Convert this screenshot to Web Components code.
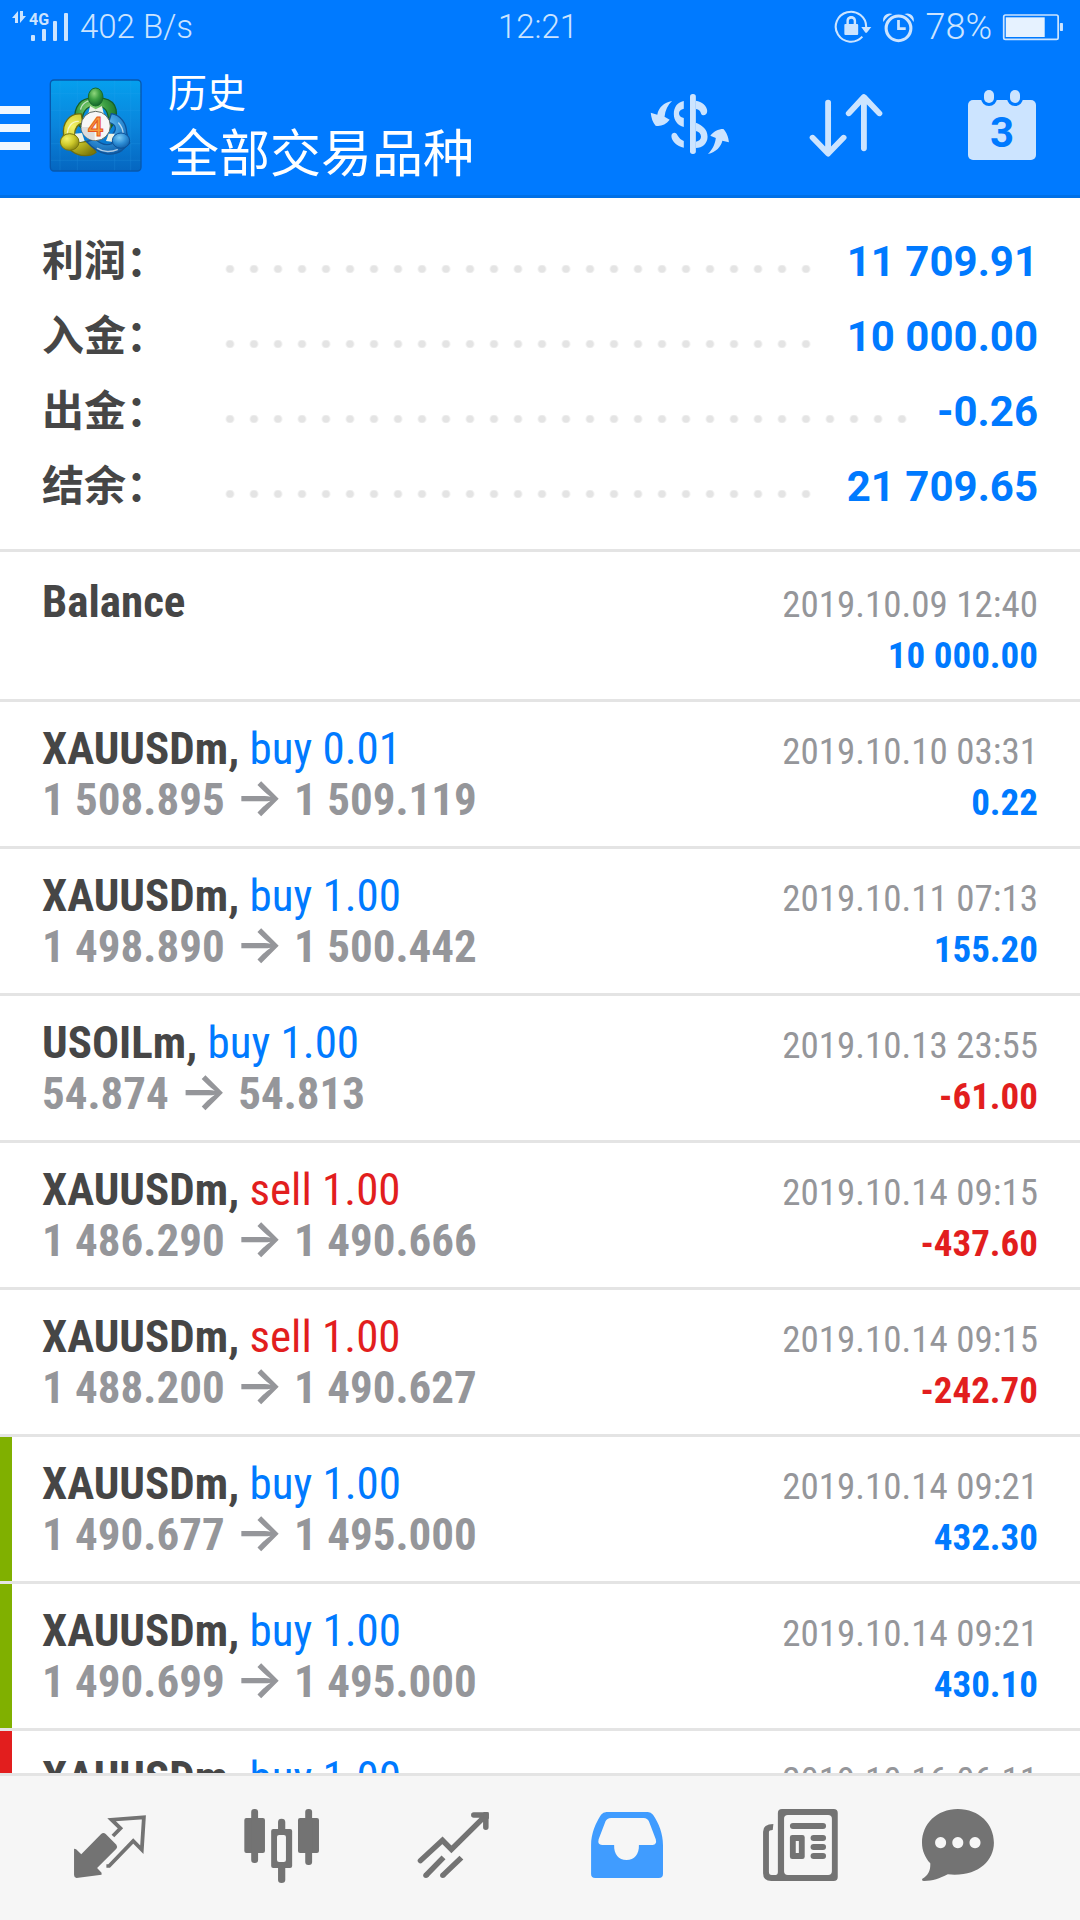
<!DOCTYPE html>
<html lang="zh-CN">
<head>
<meta charset="utf-8">
<meta name="viewport" content="width=device-width, initial-scale=1">
<title>历史</title>
<style>
  html, body { height: 100%; margin: 0; }
  body { font-family: Roboto, "Noto Sans CJK SC", sans-serif; background: #fff; color: #464646; }
</style>
</head>
<body>
<trade-app>
  <status-bar slot="top"></status-bar>
  <app-header slot="top">
    <span slot="title">历史</span>
    <span slot="subtitle">全部交易品种</span>
  </app-header>

  <account-summary>
    <summary-line value="11 709.91">利润：</summary-line>
    <summary-line value="10 000.00">入金：</summary-line>
    <summary-line value="-0.26">出金：</summary-line>
    <summary-line value="21 709.65">结余：</summary-line>
  </account-summary>

  <deal-row class="first" symbol="Balance" time="2019.10.09 12:40" profit="10 000.00"></deal-row>
  <deal-row symbol="XAUUSDm" side="buy" volume="0.01" open="1 508.895" close="1 509.119" time="2019.10.10 03:31" profit="0.22"></deal-row>
  <deal-row symbol="XAUUSDm" side="buy" volume="1.00" open="1 498.890" close="1 500.442" time="2019.10.11 07:13" profit="155.20"></deal-row>
  <deal-row symbol="USOILm" side="buy" volume="1.00" open="54.874" close="54.813" time="2019.10.13 23:55" profit="-61.00"></deal-row>
  <deal-row symbol="XAUUSDm" side="sell" volume="1.00" open="1 486.290" close="1 490.666" time="2019.10.14 09:15" profit="-437.60"></deal-row>
  <deal-row symbol="XAUUSDm" side="sell" volume="1.00" open="1 488.200" close="1 490.627" time="2019.10.14 09:15" profit="-242.70"></deal-row>
  <deal-row mark="tp" symbol="XAUUSDm" side="buy" volume="1.00" open="1 490.677" close="1 495.000" time="2019.10.14 09:21" profit="432.30"></deal-row>
  <deal-row mark="tp" symbol="XAUUSDm" side="buy" volume="1.00" open="1 490.699" close="1 495.000" time="2019.10.14 09:21" profit="430.10"></deal-row>
  <deal-row mark="sl" symbol="XAUUSDm" side="buy" volume="1.00" time="2019.10.16 06:11"></deal-row>

  <tab-bar slot="bottom"></tab-bar>
</trade-app>

<template id="t-app">
  <style>
    :host { display: flex; flex-direction: column; height: 100vh; }
    main { flex: 1; min-height: 0; overflow: hidden; background: #fff; }
  </style>
  <slot name="top"></slot>
  <main><slot></slot></main>
  <slot name="bottom"></slot>
</template>

<template id="t-status">
  <style>
    :host { display: grid; grid-template-columns: 1fr auto 1fr; align-items: center; box-sizing: border-box; height: 55px; padding: 0 16px 2px 12px;
      background: #007aff; color: #cce4ff; font-size: 33px; font-weight: 300; line-height: 1; }
    div { display: flex; align-items: center; gap: 10px; }
    .right { justify-content: flex-end; font-size: 36px; }
    svg { display: block; flex: none; }
  </style>
  <div>
    <svg width="58" height="46" viewBox="12 4 58 46" fill="#cce4ff" role="img" aria-label="4G">
      <path d="M12 18L18 11V23H15V18ZM20 11H23V16H26L20 23Z"/>
      <text x="29" y="25" font-family="Roboto" font-weight="700" font-size="16">4G</text>
      <rect x="31" y="35" width="4" height="6" rx="1"/><rect x="42" y="29" width="4" height="12" rx="1"/>
      <rect x="53" y="21" width="4" height="20" rx="1"/><rect x="64" y="13" width="4" height="28" rx="1"/>
    </svg>
    <span>402 B/s</span>
  </div>
  <time>12:21</time>
  <div class="right">
    <svg width="38" height="34" viewBox="850 30 110 102" preserveAspectRatio="none" fill="#cce4ff" aria-hidden="true">
      <path d="M943 82A44 45 0 1 0 932 110" fill="none" stroke="#cce4ff" stroke-width="6"/>
      <path d="M929 81H958L945 98H941Z"/>
      <path d="M880 74Q880 72 883 72H886V62C886 43 914 43 914 62V72H917Q920 72 920 75V102Q920 105 917 105H883Q880 105 880 102ZM893 72H907V63C907 54 893 54 893 63Z" fill-rule="evenodd"/>
    </svg>
    <svg width="33" height="34" viewBox="990 30 96 102" preserveAspectRatio="none" fill="none" stroke="#cce4ff" aria-hidden="true">
      <ellipse cx="1038" cy="85" rx="36" ry="37" stroke-width="9"/>
      <path d="M1038 60V86H1059" stroke-width="8"/>
      <path d="M994 66C990 48 1004 36 1021 42C1010 46 1001 54 994 66ZM1082 66C1086 48 1072 36 1055 42C1066 46 1075 54 1082 66Z" fill="#cce4ff" stroke="none"/>
    </svg>
    <span>78%</span>
    <svg width="62" height="30" viewBox="1345 36 180 90" preserveAspectRatio="none" fill="#e6f2ff" aria-hidden="true">
      <rect x="1350" y="45" width="158" height="73" rx="5" fill="none" stroke="#cce4ff" stroke-width="5"/>
      <rect x="1356" y="52" width="113" height="59"/><rect x="1513" y="69" width="9" height="24" rx="2" fill="#cce4ff"/>
    </svg>
  </div>
</template>

<template id="t-header">
  <style>
    :host { display: flex; align-items: center; height: 140px; background: #007aff; border-bottom: 3px solid #0070e6; color: #fff;
      font-family: "Noto Sans CJK SC", sans-serif; }
    button { appearance: none; border: 0; padding: 0; margin: 0; background: none; display: flex; justify-content: center; align-items: center; }
    svg { display: block; }
    .menu { width: 30px; }
    .logo { margin: 0 25px 0 19px; flex: none; }
    hgroup { flex: 1; min-width: 0; padding-bottom: 6px; white-space: nowrap; }
    p, h1 { margin: 0; font-weight: 400; }
    p { font-size: 39px; line-height: 56px; }
    h1 { font-size: 51px; line-height: 64px; }
    .tool { width: 156px; height: 140px; }
  </style>
  <button class="menu" aria-label="菜单"><svg width="30" height="50" viewBox="0 -6 30 50" fill="#f0f7ff"><path d="M0 0H30V8H0ZM0 18H30V26H0ZM0 36H30V44H0Z"/></svg></button>
  <svg class="logo" width="94" height="94" viewBox="27 25 282 282" aria-hidden="true">
    <defs>
      <linearGradient id="bg" x2="0" y2="1"><stop offset="0" stop-color="#05a0ee"/><stop offset=".5" stop-color="#0a85dc"/><stop offset="1" stop-color="#0566c0"/></linearGradient>
      <radialGradient id="g" cx=".4" cy=".3" r=".7"><stop offset="0" stop-color="#8fd67c"/><stop offset=".5" stop-color="#3da043"/><stop offset="1" stop-color="#14682a"/></radialGradient>
      <radialGradient id="y" cx=".35" cy=".3" r=".8"><stop offset="0" stop-color="#f4f268"/><stop offset=".5" stop-color="#cdc82a"/><stop offset="1" stop-color="#7d7a0c"/></radialGradient>
      <radialGradient id="b" cx=".4" cy=".3" r=".8"><stop offset="0" stop-color="#7ccbf5"/><stop offset=".5" stop-color="#2f8fd6"/><stop offset="1" stop-color="#0a55a0"/></radialGradient>
    </defs>
    <rect x="31" y="31" width="272" height="273" rx="11" fill="url(#bg)" stroke="#0758ad" stroke-width="4"/>
    <path d="M60 33V302M112 33V302M224 33V302M272 33V302M33 72H301M33 122H301M33 222H301M33 272H301" stroke="#35a9f0" stroke-width="1.500" opacity=".35"/>
    <path d="M145 86C112 92 98 126 108 160L128 178C122 150 128 122 148 112L167 124L186 112C208 122 208 158 202 190L214 172C238 140 236 94 190 86Z" fill="url(#g)" stroke="#155f28" stroke-width="4"/>
    <path d="M124 133C88 130 66 160 71 196L62 215L95 244C118 262 152 262 168 248L150 214L118 218L104 195C104 174 112 164 128 160Z" fill="url(#y)" stroke="#6f6d0f" stroke-width="4"/>
    <path d="M214 132C242 136 260 162 260 190L269 220L246 242C216 262 178 256 140 216L166 208C184 226 200 228 216 222L214 198C232 180 230 164 206 158Z" fill="url(#b)" stroke="#0f549a" stroke-width="4"/>
    <path d="M115 155C96 154 83 172 82 190M122 118C126 104 134 98 144 94M236 160C248 174 250 184 249 194M172 236C190 248 214 248 232 240" fill="none" stroke="#fff" stroke-width="4" opacity=".65" stroke-linecap="round"/>
    <path d="M150 109L167 119L186 109L192 136H144ZM104 192L126 190L134 214L118 218ZM206 192L224 192L216 216L198 214Z" fill="#eef3e6"/>
    <ellipse cx="167" cy="82" rx="22" ry="27" fill="url(#g)" stroke="#176a2c" stroke-width="3"/>
    <ellipse cx="89" cy="217" rx="28" ry="25" fill="url(#y)" stroke="#77750f" stroke-width="3"/>
    <ellipse cx="243" cy="213" rx="26" ry="23" fill="url(#b)" stroke="#0d529a" stroke-width="3"/>
    <circle cx="167" cy="169" r="44" fill="#f7f7f7" stroke="#5f6b62" stroke-width="3"/>
    <path d="M124 172H164V212C140 210 124 192 124 172Z" fill="#dcdcdc"/>
    <text x="167" y="198" text-anchor="middle" font-family="Open Sans" font-weight="600" font-size="80" fill="#f5a03c" stroke="#e8541e" stroke-width="3">4</text>
  </svg>
  <hgroup><p><slot name="title"></slot></p><h1><slot name="subtitle"></slot></h1></hgroup>
  <button class="tool" aria-label="交易品种">
    <svg width="84" height="84" viewBox="314 249 244 252" preserveAspectRatio="none" fill="#cce4ff">
      <rect x="436" y="282" width="17" height="180" rx="8"/>
      <path d="M418 303C398 308 389 322 389 342C389 362 400 376 418 381V354C408 352 404 347 404 340C404 333 409 328 418 326ZM453 302C470 304 486 318 486 333C486 342 480 346 475 346C468 345 468 339 466 335C463 330 458 327 453 327ZM453 368C472 376 487 388 487 410C487 430 472 444 453 444V425C462 422 468 418 468 410C468 402 462 395 453 393ZM418 443C398 438 382 424 382 408C382 401 387 398 391 398C398 399 398 404 401 408C405 415 410 420 418 423Z"/>
      <path d="M384 303C360 308 345 322 341 344L322 338C323 352 328 368 336 377C350 380 366 374 377 359L362 350C364 330 372 314 384 303ZM549 427C548 412 542 396 533 387C518 387 504 395 495 407L511 414C508 436 500 450 488 462C512 456 526 440 530 422Z"/>
    </svg>
  </button>
  <button class="tool" aria-label="排序">
    <svg width="84" height="84" viewBox="767 249 244 252" preserveAspectRatio="none" fill="none" stroke="#cce4ff" stroke-width="17" stroke-linecap="round" stroke-linejoin="round">
      <path d="M837 308V458M792 413L837 461L882 413M941 445V294M897 340L941 291L986 340"/>
    </svg>
  </button>
  <button class="tool" aria-label="日期">
    <svg width="84" height="84" viewBox="0 0 84 84" fill="#cce4ff">
      <rect x="8" y="17" width="68" height="60" rx="5"/>
      <g stroke="#007aff" stroke-width="6" paint-order="stroke"><rect x="24" y="7" width="10" height="13" rx="5"/><rect x="50" y="7" width="10" height="13" rx="5"/></g>
      <text x="42" y="64" text-anchor="middle" font-family="Roboto" font-weight="700" font-size="42" fill="#007aff">3</text>
    </svg>
  </button>
</template>

<template id="t-summary">
  <style>:host { display: block; padding: 26px 42px 25px; border-bottom: 3px solid #e4e4e4; }</style>
  <slot></slot>
</template>

<template id="t-line">
  <style>
    :host { display: flex; align-items: center; height: 75px; font-size: 42px; line-height: 50px; }
    .label { flex: none; width: 176px; padding-bottom: 8px; font-family: "Noto Sans CJK SC", sans-serif; font-weight: 700; color: #464646; }
    .dots { flex: 1; height: 8px; margin: 14px 24px 0 0; background: radial-gradient(circle at center, #e4e4e4 3px, transparent 5px) 0 0 / 24px 8px repeat-x; }
    .value { color: #007aff; font-weight: 700; }
  </style>
  <span class="label"><slot></slot></span><span class="dots"></span><span class="value"></span>
</template>

<template id="t-deal">
  <style>
    :host { display: flex; justify-content: space-between; align-items: baseline; box-sizing: border-box; height: 147px; padding: 21px 42px 0;
      border-bottom: 3px solid #e4e4e4; font-family: "Roboto Condensed", "Liberation Sans Narrow", Roboto, sans-serif; line-height: 51px; white-space: nowrap; }
    :host(.first) { height: 150px; padding-top: 24px; }
    :host([mark]) { background: linear-gradient(#80b000, #80b000) 0 0 / 12px 144px no-repeat; }
    :host([mark="sl"]) { background-image: linear-gradient(#e21e1e, #e21e1e); }
    .deal { font-size: 45px; }
    .info { font-size: 37px; text-align: right; }
    b { display: block; height: 51px; font-weight: 700; }
    .name { font-weight: 700; color: #464646; }
    .side, .profit { color: #007aff; }
    .loss { color: #e21e1e; }
    .price, .time { color: #95969a; }
    .arrow { font-family: Inter, sans-serif; font-size: 51px; font-weight: 600; line-height: 0; }
  </style>
  <div class="deal"><span class="name"></span> <span class="side"></span><b class="price"></b></div>
  <div class="info"><time class="time"></time><b class="profit"></b></div>
</template>

<template id="t-tabs">
  <style>
    :host { display: block; flex: none; background: #f6f6f6; border-top: 3px solid #e4e4e4; }
    nav { display: flex; height: 144px; padding: 0 24px; }
    button { flex: 1; appearance: none; border: 0; padding: 0; background: none; display: flex; justify-content: center; align-items: center; color: #737373; }
    button[aria-current] { color: #409cff; }
    svg { display: block; fill: currentColor; }
  </style>
  <nav>
    <button aria-label="行情"><svg width="96" height="84" viewBox="180 198 279 252" preserveAspectRatio="none">
      <path d="M215 326L221 328L236 343L293 283Q300 276 307 282L338 314Q342 320 338 326L282 384L295 398V404L222 414Q215 412 215 405Z"/>
      <path d="M328 288L350 265L324 239L418 232L412 329L387 303L317 378H309" fill="none" stroke="currentColor" stroke-width="11"/>
    </svg></button>
    <button aria-label="图表"><svg width="96" height="84" viewBox="679 198 279 252" preserveAspectRatio="none">
      <rect x="709" y="234" width="60" height="105" rx="6"/><rect x="729" y="207" width="20" height="162" rx="9"/>
      <rect x="865" y="234" width="61" height="105" rx="6"/><rect x="886" y="207" width="20" height="168" rx="9"/>
      <path fill-rule="evenodd" d="M793 267H807V246Q807 236 817 236Q828 236 828 246V267H842Q848 267 848 273V378Q848 384 842 384H828V420Q828 429 817 429Q807 429 807 420V384H793Q787 384 787 378V273Q787 267 793 267ZM810 285Q804 285 804 291V360Q804 366 810 366H824Q830 366 830 360V291Q830 285 824 285Z"/>
    </svg></button>
    <button aria-label="交易"><svg width="96" height="84" viewBox="1179 198 279 252" preserveAspectRatio="none">
      <path d="M1221 362L1285 301L1311 328L1411 226M1376 225H1411V262" fill="none" stroke="currentColor" stroke-width="16" stroke-linecap="round"/>
      <path d="M1404 216H1414Q1420 216 1420 222V236H1404Z"/>
      <path d="M1237 406L1288 352M1286 406L1340 353" fill="none" stroke="currentColor" stroke-width="16"/><circle cx="1237" cy="406" r="8"/><circle cx="1286" cy="406" r="8"/>
    </svg></button>
    <button aria-label="历史" aria-current="page"><svg width="96" height="84" viewBox="110 198 279 252" preserveAspectRatio="none">
      <path fill-rule="evenodd" d="M193 216H313Q322 216 328 224C345 250 357 280 357 315V402Q357 414 345 414H160Q148 414 148 402V315C148 280 161 250 177 224Q183 216 193 216ZM206 234Q194 235 190 244L170 298Q166 315 180 315H215C214 342 228 360 251 360C274 360 288 342 287 315H327Q340 314 336 298L316 244Q312 235 301 234Z"/>
    </svg></button>
    <button aria-label="新闻"><svg width="96" height="84" viewBox="610 198 279 252" preserveAspectRatio="none">
      <path fill-rule="evenodd" d="M703 207H853Q865 207 865 219V411Q865 423 853 423H672Q648 423 648 400V275Q648 252 678 252L676 270Q665 270 665 277V396Q665 405 673 405H684Q691 405 691 396V219Q691 207 703 207ZM720 225Q709 225 709 236V394Q709 405 720 405H837Q848 405 848 394V236Q848 225 837 225Z"/>
      <rect x="726" y="249" width="105" height="18" rx="9"/>
      <path fill-rule="evenodd" d="M733 285H762Q769 285 769 292V350Q769 357 762 357H733Q726 357 726 350V292Q726 285 733 285ZM743 303V339H752V303Z"/>
      <rect x="786" y="285" width="45" height="18" rx="9"/><rect x="786" y="312" width="45" height="18" rx="9"/><rect x="786" y="339" width="45" height="18" rx="9"/>
    </svg></button>
    <button aria-label="消息"><svg width="96" height="84" viewBox="1109 198 279 252" preserveAspectRatio="none">
      <path fill-rule="evenodd" d="M1213 207C1275 207 1318 252 1318 308C1318 364 1268 412 1184 403C1160 416 1140 423 1115 423Q1107 422 1110 416C1128 405 1134 390 1133 370C1118 352 1109 332 1109 308C1109 252 1152 207 1213 207ZM1163 291A16 17 0 1 0 1163.100 291ZM1213 291A16 17 0 1 0 1213.100 291ZM1263 291A16 17 0 1 0 1263.100 291Z"/>
    </svg></button>
  </nav>
</template>

<script>
  class Base extends HTMLElement {
    constructor() {
      super();
      this.attachShadow({ mode: "open" }).append(
        document.getElementById(this.constructor.template).content.cloneNode(true));
    }
    $(selector) { return this.shadowRoot.querySelector(selector); }
    attr(name) { return this.getAttribute(name) || ""; }
  }

  class TradeApp extends Base { static template = "t-app"; }
  class StatusBar extends Base { static template = "t-status"; }
  class AppHeader extends Base { static template = "t-header"; }
  class AccountSummary extends Base { static template = "t-summary"; }
  class TabBar extends Base { static template = "t-tabs"; }

  class SummaryLine extends Base {
    static template = "t-line";
    connectedCallback() { this.$(".value").textContent = this.attr("value"); }
  }

  class DealRow extends Base {
    static template = "t-deal";
    connectedCallback() {
      const side = this.attr("side"), profit = this.attr("profit");
      this.$(".name").textContent = this.attr("symbol") + (side ? "," : "");
      this.$(".side").textContent = side ? side + " " + this.attr("volume") : "";
      this.$(".side").classList.toggle("loss", side === "sell");
      if (this.attr("open")) {
        const arrow = document.createElement("span");
        arrow.className = "arrow";
        arrow.textContent = "→";
        this.$(".price").append(this.attr("open") + " ", arrow, " " + this.attr("close"));
      }
      this.$(".time").textContent = this.attr("time");
      this.$(".profit").textContent = profit;
      this.$(".profit").classList.toggle("loss", profit.startsWith("-"));
    }
  }

  customElements.define("trade-app", TradeApp);
  customElements.define("status-bar", StatusBar);
  customElements.define("app-header", AppHeader);
  customElements.define("account-summary", AccountSummary);
  customElements.define("summary-line", SummaryLine);
  customElements.define("deal-row", DealRow);
  customElements.define("tab-bar", TabBar);
</script>
</body>
</html>
